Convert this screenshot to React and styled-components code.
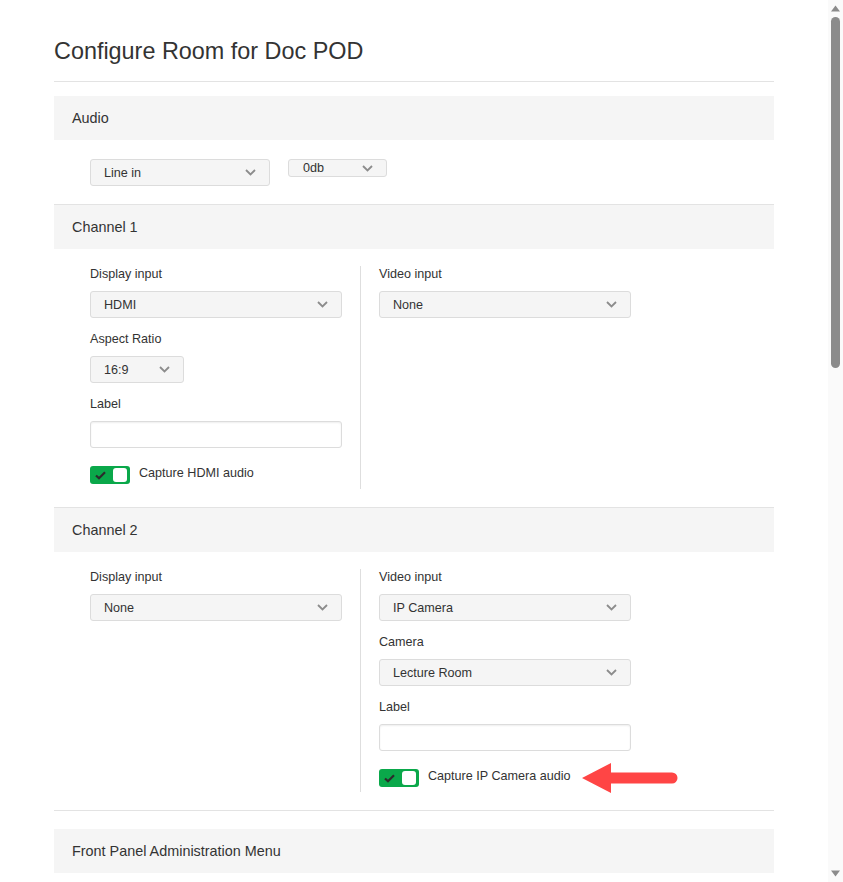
import React from "react";
import styled, { createGlobalStyle } from "styled-components";

const GlobalStyle = createGlobalStyle`
  html, body {
    margin: 0;
    padding: 0;
    background: #ffffff;
    overflow: hidden;
  }
  body {
    font-family: "Liberation Sans", Arial, sans-serif;
    color: #333333;
    font-size: 12.6px;
  }
  * { box-sizing: border-box; }
`;

const Frame = styled.div`
  display: flex;
  height: 100vh;
`;

const Main = styled.main`
  flex: 1;
  min-width: 0;
  overflow: hidden;
`;

const ScrollTrack = styled.div`
  width: 15px;
  flex: none;
  background: #fafafa;
  display: flex;
  flex-direction: column;
  align-items: center;
  padding: 5px 0;
`;

const ScrollThumb = styled.div`
  width: 9px;
  height: 351px;
  margin-top: 5px;
  border-radius: 4.5px;
  background: #8b8b8b;
`;

const ScrollSpacer = styled.div`
  flex: 1;
`;

const Page = styled.div`
  width: 720px;
  margin: 0 auto;
`;

const TitleBar = styled.div`
  padding: 38px 0 17px;
  border-bottom: 1px solid #e3e3e3;
`;

const Title = styled.h1`
  margin: 0;
  font-size: 23.4px;
  line-height: 26px;
  font-weight: 400;
  color: #333;
`;

const Section = styled.section`
  margin-top: ${(p) => p.$gap || 0}px;
  border-bottom: ${(p) => (p.$noBorder ? "none" : "1px solid #e3e3e3")};
`;

const SectionHeader = styled.div`
  height: 44px;
  display: flex;
  align-items: center;
  padding-left: 18px;
  background: #f5f5f5;
  font-size: 14.4px;
  color: #333;
`;

const SectionBody = styled.div`
  padding: 17px 0 18px 36px;
  display: flex;
  align-items: flex-start;
  gap: ${(p) => p.$gap || 0}px;
`;

const AudioBody = styled(SectionBody)`
  padding-top: 19px;
`;

const Column = styled.div`
  width: ${(p) => (p.$first ? 271 : 270)}px;
  padding: ${(p) => (p.$first ? "0 18px 5px 0" : "0 0 5px 18px")};
  border-right: ${(p) => (p.$first ? "1px solid #dedede" : "none")};
  align-self: stretch;
`;

const Field = styled.div`
  margin-bottom: 13px;
`;

const Label = styled.div`
  font-size: 12.6px;
  line-height: 16px;
  margin-bottom: 9px;
  color: #333;
`;

const SelectBox = styled.div`
  width: ${(p) => p.$w || 252}px;
  height: ${(p) => p.$h || 27}px;
  display: flex;
  align-items: center;
  justify-content: space-between;
  padding: 0 13px 0 ${(p) => p.$pl || 13}px;
  background: #f5f5f5;
  border: 1px solid #dcdcdc;
  border-radius: 3px;
  font-size: 12.6px;
  color: #333;
`;

const TextInput = styled.div`
  width: 252px;
  height: 27px;
  background: #fff;
  border: 1px solid #dcdcdc;
  border-radius: 3px;
  box-shadow: inset 0 1px 2px rgba(0, 0, 0, 0.07);
`;

const ToggleRow = styled.div`
  display: flex;
  align-items: center;
  gap: 9px;
  margin-top: 18px;
  height: 18px;
  white-space: nowrap;
`;

const Toggle = styled.div`
  flex: none;
  width: 40px;
  height: 18px;
  border-radius: 3px;
  background: #0aa84a;
  display: flex;
  align-items: center;
  justify-content: space-between;
  padding: 0 3px 0 5px;
`;

const Knob = styled.div`
  width: 14px;
  height: 14px;
  border-radius: 3px;
  background: #fff;
`;

const ToggleLabel = styled.span`
  flex: none;
  font-size: 12.6px;
  color: #333;
  line-height: 16px;
  margin-top: -4px;
`;

const Arrow = styled.svg`
  margin-left: 2px;
  flex: none;
`;

const Chevron = () => (
  <svg width="11" height="7" viewBox="0 0 11 7">
    <polyline
      points="1,1 5.5,5.5 10,1"
      fill="none"
      stroke="#8c8c8c"
      strokeWidth="1.8"
    />
  </svg>
);

const Check = () => (
  <svg width="11" height="9" viewBox="0 0 11 9">
    <polyline
      points="1,4.5 4,7.3 10,1.3"
      fill="none"
      stroke="#2b2b2b"
      strokeWidth="2.2"
    />
  </svg>
);

const ScrollArrow = ({ down }) => (
  <svg width="9" height="7" viewBox="0 0 9 7">
    <polygon
      points={down ? "0,0.5 9,0.5 4.5,6.5" : "0,6.5 9,6.5 4.5,0.5"}
      fill="#8b8b8b"
    />
  </svg>
);

const Select = ({ value, w, h, pl }) => (
  <SelectBox $w={w} $h={h} $pl={pl}>
    <span>{value}</span>
    <Chevron />
  </SelectBox>
);

const Switch = ({ label, arrow }) => (
  <ToggleRow>
    <Toggle>
      <Check />
      <Knob />
    </Toggle>
    <ToggleLabel>{label}</ToggleLabel>
    {arrow && (
      <Arrow width="96" height="30" viewBox="0 0 96 30">
        <path
          d="M0 15 L29 0 L29 9.5 L90 9.5 A5.5 5.5 0 0 1 90 20.5 L29 20.5 L29 30 Z"
          fill="#ff4545"
        />
      </Arrow>
    )}
  </ToggleRow>
);

export default function App() {
  return (
    <>
      <GlobalStyle />
      <Frame>
        <Main>
          <Page>
            <TitleBar>
              <Title>Configure Room for Doc POD</Title>
            </TitleBar>

            <Section $gap={14}>
              <SectionHeader>Audio</SectionHeader>
              <AudioBody $gap={18}>
                <Select value="Line in" w={180} />
                <Select value="0db" w={99} h={18} pl={14} />
              </AudioBody>
            </Section>

            <Section>
              <SectionHeader>Channel 1</SectionHeader>
              <SectionBody>
                <Column $first>
                  <Field>
                    <Label>Display input</Label>
                    <Select value="HDMI" />
                  </Field>
                  <Field>
                    <Label>Aspect Ratio</Label>
                    <Select value="16:9" w={94} />
                  </Field>
                  <Field>
                    <Label>Label</Label>
                    <TextInput />
                  </Field>
                  <Switch label="Capture HDMI audio" />
                </Column>
                <Column>
                  <Field>
                    <Label>Video input</Label>
                    <Select value="None" />
                  </Field>
                </Column>
              </SectionBody>
            </Section>

            <Section>
              <SectionHeader>Channel 2</SectionHeader>
              <SectionBody>
                <Column $first>
                  <Field>
                    <Label>Display input</Label>
                    <Select value="None" />
                  </Field>
                </Column>
                <Column>
                  <Field>
                    <Label>Video input</Label>
                    <Select value="IP Camera" />
                  </Field>
                  <Field>
                    <Label>Camera</Label>
                    <Select value="Lecture Room" />
                  </Field>
                  <Field>
                    <Label>Label</Label>
                    <TextInput />
                  </Field>
                  <Switch label="Capture IP Camera audio" arrow />
                </Column>
              </SectionBody>
            </Section>

            <Section $gap={18} $noBorder>
              <SectionHeader>Front Panel Administration Menu</SectionHeader>
            </Section>
          </Page>
        </Main>
        <ScrollTrack>
          <ScrollArrow />
          <ScrollThumb />
          <ScrollSpacer />
          <ScrollArrow down />
        </ScrollTrack>
      </Frame>
    </>
  );
}
